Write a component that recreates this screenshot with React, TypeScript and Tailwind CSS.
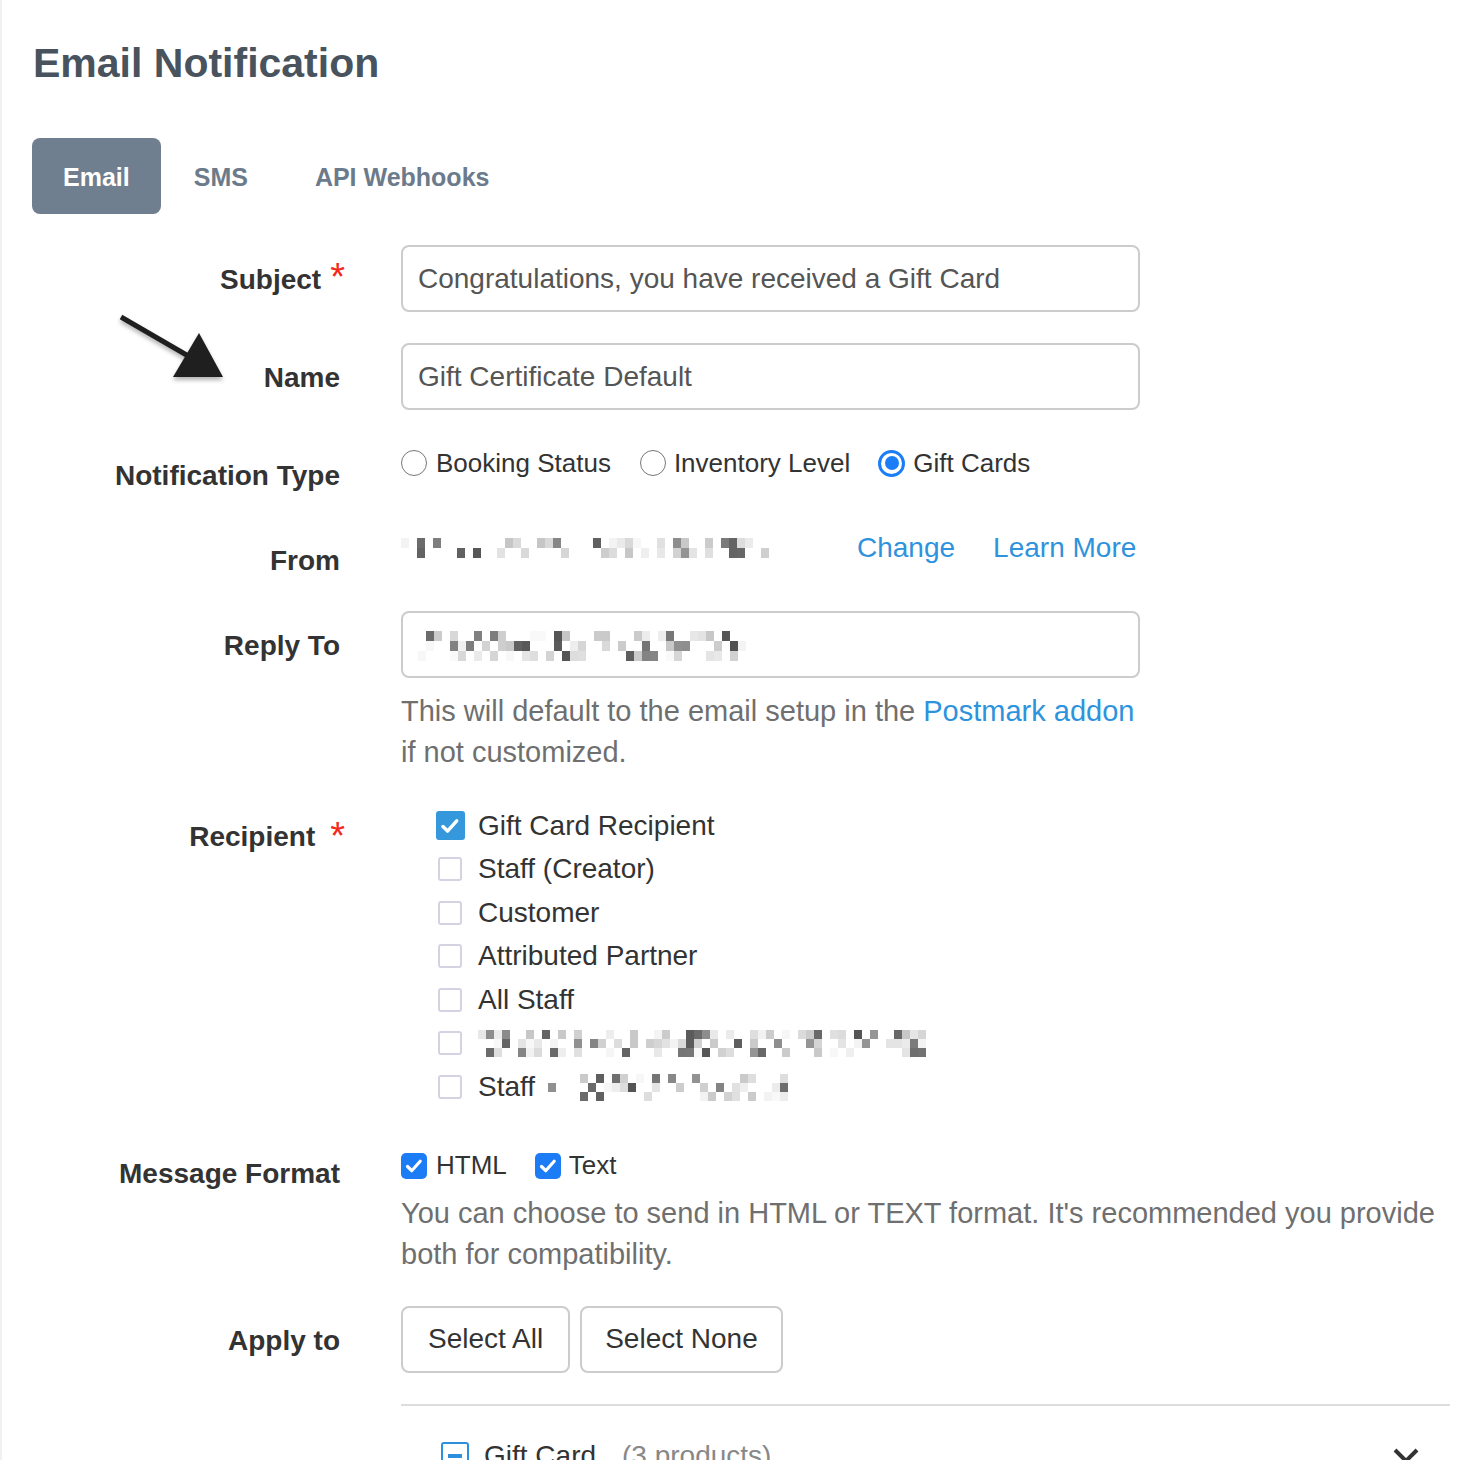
import React from 'react';

// pixelated (redacted) text blocks
function Mosaic({ seed, width, rows, cw = 8, ch = 10 }: { seed: number; width: number; rows: number; cw?: number; ch?: number }) {
  let s = seed;
  const rand = () => {
    s = (s * 9301 + 49297) % 233280;
    return s / 233280;
  };
  const cols = Math.floor(width / cw);
  const cells: React.ReactNode[] = [];
  for (let r = 0; r < rows; r++) {
    for (let c = 0; c < cols; c++) {
      const v = rand();
      const t = rand();
      if (v < 0.5) continue;
      const g = t < 0.35 ? 80 + Math.floor(t * 200) : 170 + Math.floor(t * 80);
      cells.push(<rect key={`${r}-${c}`} x={c * cw} y={r * ch} width={cw} height={ch} fill={`rgb(${g},${g},${g})`} />);
    }
  }
  return (
    <svg width={cols * cw} height={rows * ch} className="block shrink-0">
      {cells}
    </svg>
  );
}

function Check({ size }: { size: number }) {
  return (
    <svg width={size} height={size} viewBox="0 0 24 24">
      <path d="M5.5 12.5l4.2 4.2 8.5-9.4" fill="none" stroke="white" strokeWidth="3.2" strokeLinecap="round" strokeLinejoin="round" />
    </svg>
  );
}

function Radio({ checked }: { checked?: boolean }) {
  if (checked) {
    return (
      <span className="w-[27px] h-[27px] shrink-0 rounded-full border-[3px] border-[#1b7ef7] bg-white flex items-center justify-center">
        <span className="w-[14px] h-[14px] rounded-full bg-[#1b7ef7]" />
      </span>
    );
  }
  return <span className="block w-[26px] h-[26px] shrink-0 rounded-full border-[1.5px] border-[#777] bg-white" />;
}

function Label({ children, req, reqClass }: { children: React.ReactNode; req?: boolean; reqClass?: string }) {
  return (
    <>
      <span className="text-[28px] font-bold leading-[32px] text-[#333]">{children}</span>
      {req && <span className={`${reqClass} self-start text-[38px] leading-none text-[#f5281b]`}>*</span>}
    </>
  );
}

const recipients = ['Gift Card Recipient', 'Staff (Creator)', 'Customer', 'Attributed Partner', 'All Staff'];

export default function App() {
  return (
    <div className="relative min-h-screen bg-white border-l-2 border-[#f1f1f1] pl-[31px] pr-[12px] font-[Liberation_Sans,Arial,sans-serif] text-[#333]">
      <h1 className="pt-[43px] text-[41px] font-bold leading-none text-[#48535e]">Email Notification</h1>

      <div className="mt-[54px] -ml-[1px] flex items-center gap-[2px]">
        <button className="h-[76px] px-[31px] pt-[4px] rounded-[8px] bg-[#6f7f8f] text-white text-[25px] font-bold">Email</button>
        <button className="h-[76px] px-[31px] pt-[4px] text-[#6b7b8b] text-[25px] font-bold">SMS</button>
        <button className="h-[76px] px-[31px] pt-[4px] ml-[3px] text-[#6b7b8b] text-[25px] font-bold">API Webhooks</button>
      </div>

      {/* annotation arrow */}
      <svg className="absolute left-[98px] top-[300px] drop-shadow-[0_3px_2px_rgba(0,0,0,0.3)]" width="140" height="90">
        <line x1="21" y1="17" x2="90" y2="57" stroke="#1f1f1f" strokeWidth="5" />
        <polygon points="99,33 73,77 123,77" fill="#1f1f1f" />
      </svg>

      <div className="mt-[31px] flex flex-col gap-[31px]">
        {/* Subject */}
        <div className="flex">
          <div className="w-[312px] h-[67px] shrink-0 flex items-center justify-end pt-[3px]">
            <Label req reqClass="ml-[9px] mt-[10px]">Subject</Label>
          </div>
          <input
            readOnly
            value="Congratulations, you have received a Gift Card"
            className="ml-[56px] w-[739px] h-[67px] rounded-[8px] border-2 border-[#cccccc] px-[15px] text-[28px] text-[#555] outline-none"
          />
        </div>

        {/* Name */}
        <div className="flex">
          <div className="w-[312px] h-[67px] shrink-0 flex items-center justify-end pt-[3px] pr-[5px]">
            <Label>Name</Label>
          </div>
          <input
            readOnly
            value="Gift Certificate Default"
            className="ml-[56px] w-[739px] h-[67px] rounded-[8px] border-2 border-[#cccccc] px-[15px] text-[28px] text-[#555] outline-none"
          />
        </div>

        {/* Notification Type */}
        <div className="flex h-[44px]">
          <div className="w-[312px] shrink-0 flex justify-end pt-[19px] pr-[5px]">
            <Label>Notification Type</Label>
          </div>
          <div className="ml-[56px] h-[44px] flex items-center text-[26px] text-[#333]">
            <Radio />
            <span className="ml-[9px]">Booking Status</span>
            <span className="ml-[29px] flex"><Radio /></span>
            <span className="ml-[8px]">Inventory Level</span>
            <span className="ml-[28px] flex"><Radio checked /></span>
            <span className="ml-[8px]">Gift Cards</span>
          </div>
        </div>

        {/* From */}
        <div className="flex">
          <div className="w-[312px] shrink-0 flex justify-end pt-[29px] pr-[5px]">
            <Label>From</Label>
          </div>
          <div className="ml-[56px] h-[64px] flex items-center">
            <Mosaic seed={17} width={370} rows={2} />
            <a className="ml-[88px] text-[28px] text-[#2e93dd]">Change</a>
            <a className="ml-[38px] text-[28px] text-[#2e93dd]">Learn More</a>
          </div>
        </div>

        {/* Reply To */}
        <div className="flex">
          <div className="w-[312px] h-[67px] shrink-0 flex items-center justify-end pt-[3px] pr-[5px]">
            <Label>Reply To</Label>
          </div>
          <div className="ml-[56px] flex-1">
            <div className="w-[739px] h-[67px] rounded-[8px] border-2 border-[#cccccc] px-[15px] pt-[2px] flex items-center">
              <Mosaic seed={53} width={332} rows={3} />
            </div>
            <p className="mt-[13px] text-[29px] leading-[41px] text-[#6f6f6f] whitespace-nowrap">
              This will default to the email setup in the <a className="text-[#2e93dd]">Postmark addon</a>
              <br />
              if not customized.
            </p>
          </div>
        </div>

        {/* Recipient */}
        <div className="flex">
          <div className="w-[312px] shrink-0 flex justify-end pt-[17px]">
            <Label req reqClass="ml-[15px] -mt-[4px]">Recipient</Label>
          </div>
          <div className="ml-[56px] flex flex-col">
            {recipients.map((r, i) => (
              <div key={r} className="h-[43.5px] pl-[37px] flex items-center text-[28px] text-[#333]">
                <span className="w-[24px] flex justify-center">
                  {i === 0 ? (
                    <span className="w-[29px] h-[29px] shrink-0 rounded-[3px] bg-[#3598dc] flex items-center justify-center">
                      <Check size={26} />
                    </span>
                  ) : (
                    <span className="w-[24px] h-[24px] shrink-0 rounded-[3px] border-2 border-[#d4d2e3]" />
                  )}
                </span>
                <span className="ml-[16px]">{r}</span>
              </div>
            ))}
            <div className="h-[43.5px] pl-[37px] flex items-center">
              <span className="w-[24px] h-[24px] shrink-0 rounded-[3px] border-2 border-[#d4d2e3]" />
              <span className="ml-[16px]">
                <Mosaic seed={91} width={448} rows={3} ch={9} />
              </span>
            </div>
            <div className="h-[43.5px] pl-[37px] flex items-center text-[28px] text-[#333]">
              <span className="w-[24px] h-[24px] shrink-0 rounded-[3px] border-2 border-[#d4d2e3]" />
              <span className="ml-[16px]">Staff</span>
              <span className="ml-[13px] pt-[2px]">
                <Mosaic seed={7} width={242} rows={3} ch={9} />
              </span>
            </div>
          </div>
        </div>

        {/* Message Format */}
        <div className="flex">
          <div className="w-[312px] shrink-0 flex justify-end pt-[18px] pr-[5px]">
            <Label>Message Format</Label>
          </div>
          <div className="ml-[56px] flex-1">
            <div className="h-[50px] mt-[1px] flex items-center text-[26px] text-[#333]">
              <span className="w-[26px] h-[26px] rounded-[5px] bg-[#1b7cf6] flex items-center justify-center">
                <Check size={24} />
              </span>
              <span className="ml-[9px]">HTML</span>
              <span className="ml-[28px] w-[26px] h-[26px] rounded-[5px] bg-[#1b7cf6] flex items-center justify-center">
                <Check size={24} />
              </span>
              <span className="ml-[8px]">Text</span>
            </div>
            <p className="mt-[2px] text-[29px] leading-[41px] text-[#6f6f6f] whitespace-nowrap">
              You can choose to send in HTML or TEXT format. It's recommended you provide
              <br />
              both for compatibility.
            </p>
          </div>
        </div>

        {/* Apply to */}
        <div className="flex">
          <div className="w-[312px] h-[67px] shrink-0 flex items-center justify-end pt-[3px] pr-[5px]">
            <Label>Apply to</Label>
          </div>
          <div className="ml-[56px] flex gap-[10px]">
            <button className="h-[67px] px-[25px] rounded-[8px] border-2 border-[#cccccc] bg-white text-[28px] text-[#333]">Select All</button>
            <button className="h-[67px] px-[23px] rounded-[8px] border-2 border-[#cccccc] bg-white text-[28px] text-[#333]">Select None</button>
          </div>
        </div>

        {/* product groups */}
        <div className="flex">
          <div className="w-[312px] shrink-0" />
          <div className="ml-[56px] flex-1 border-t-2 border-[#dddddd] pt-[28px]">
            <div className="h-[44px] pl-[40px] flex items-center text-[28px]">
              <span className="w-[28px] h-[28px] shrink-0 rounded-[3px] border-2 border-[#2e8fdd] flex items-center justify-center">
                <span className="w-[14px] h-[4px] bg-[#2e8fdd]" />
              </span>
              <span className="ml-[15px] text-[#333]">Gift Card</span>
              <span className="ml-[26px] text-[#888]">(3 products)</span>
              <svg className="ml-auto mr-[30px]" width="28" height="18" viewBox="0 0 28 18">
                <path d="M3 3l11 11L25 3" fill="none" stroke="#333" strokeWidth="4" />
              </svg>
            </div>
          </div>
        </div>
      </div>
    </div>
  );
}
